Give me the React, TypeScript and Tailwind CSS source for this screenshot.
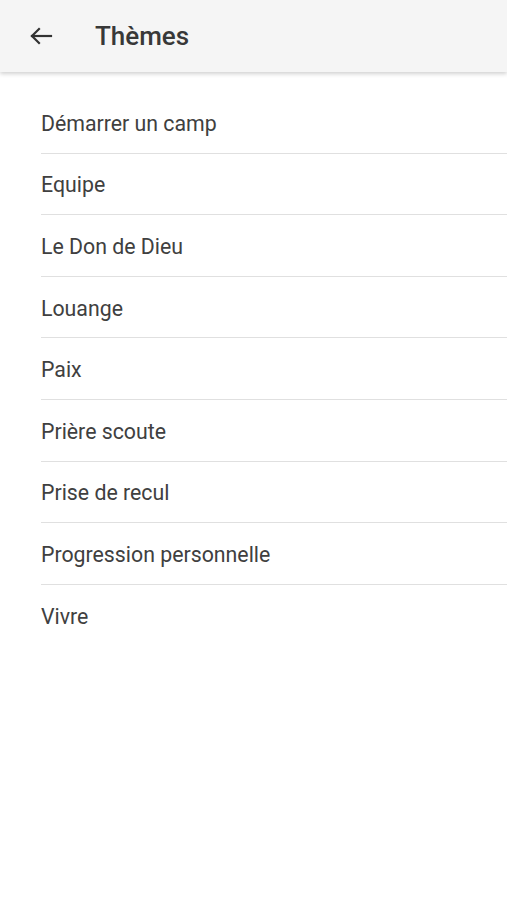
import React from "react";

const items = [
  "Démarrer un camp",
  "Equipe",
  "Le Don de Dieu",
  "Louange",
  "Paix",
  "Prière scoute",
  "Prise de recul",
  "Progression personnelle",
  "Vivre",
];

export default function App() {
  return (
    <div className="w-[507px] h-[900px] bg-white overflow-hidden" style={{ fontFamily: "Roboto, 'Noto Sans', sans-serif" }}>
      <header className="relative z-10 h-[72px] bg-[#f5f5f5] flex items-center shadow-[0_2px_4px_rgba(0,0,0,0.18)]">
        <div className="w-[95px] flex items-center pl-[29px]">
          <svg width="24" height="18" viewBox="0 0 24 18" fill="none" stroke="#333" strokeWidth="2.2" strokeLinecap="square">
            <path d="M3 9H22" />
            <path d="M10 2L3 9L10 16" />
          </svg>
        </div>
        <h1 className="text-[26px] font-medium text-[#383838] leading-none">Thèmes</h1>
      </header>
      <ul className="pt-[20px] pl-[41px]">
        {items.map((it, i) => (
          <li
            key={it}
            className={`h-[61.6px] flex items-center pt-[3px] text-[21.3px] text-[#404040] ${i < items.length - 1 ? "border-b border-[#e0e0e0]" : ""}`}
          >
            {it}
          </li>
        ))}
      </ul>
    </div>
  );
}
